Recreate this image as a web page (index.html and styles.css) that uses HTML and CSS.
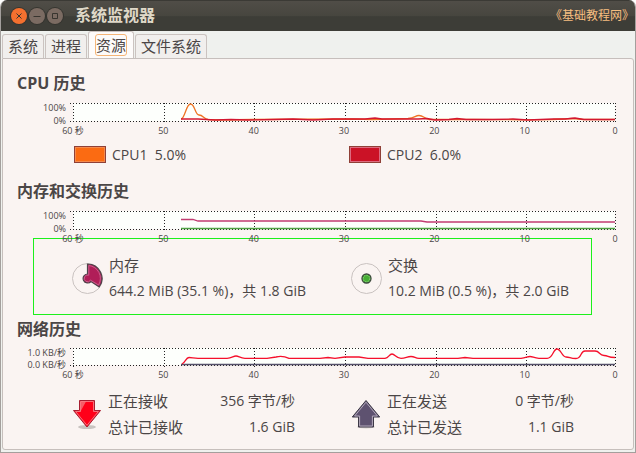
FILE: index.html
```html
<!DOCTYPE html>
<html lang="zh-CN">
<head>
  <meta charset="UTF-8">
  <meta name="viewport" content="width=device-width, initial-scale=1.0">
  <title>系统监视器</title>
  <link rel="stylesheet" href="styles.css">
</head>
<body>
  <div class="window">

    <!-- 标题栏 -->
    <header class="titlebar">
      <div class="window-buttons">
        <button class="win-btn close" aria-label="关闭"><svg viewBox="0 0 16 16"><path d="M5.500 5.500l5 5M10.500 5.500l-5 5"/></svg></button>
        <button class="win-btn" aria-label="最小化"><svg viewBox="0 0 16 16"><path d="M4.500 8.500h7"/></svg></button>
        <button class="win-btn" aria-label="最大化"><svg viewBox="0 0 16 16"><path d="M5.500 5.500h5v5h-5z"/></svg></button>
      </div>
      <h1>系统监视器</h1>
      <span class="site-name">《基础教程网》</span>
    </header>

    <!-- 选项卡 -->
    <nav class="tabs" role="tablist">
      <button class="tab" role="tab">系统</button>
      <button class="tab" role="tab">进程</button>
      <button class="tab active" role="tab" aria-selected="true"><span>资源</span></button>
      <button class="tab" role="tab">文件系统</button>
    </nav>

    <main class="panel">

      <!-- CPU -->
      <section class="cpu">
        <h2>CPU 历史</h2>
        <div class="chart">
          <div class="scale"><span>100%</span><span>0%</span></div>
          <svg class="plot" viewBox="0 0 542 18" preserveAspectRatio="none">
            <rect width="542" height="18"/>
            <path class="grid" d="M-3 .5H543M-3 18.500H543M.5 0V21M91.500 0V21M181.500 0V21M272.500 0V21M363.500 0V21M453.500 0V21M542.500 0V21"/>
            <path class="line orange" d="M108 16C112 16 113 1 117.500 1S122 12 126 12S131 16 135 16.500L145 17L180 16.500L280 16L300 16.500L335 15.500C342 15 342 12.500 346 12.500S351 15 356 16.500L400 16.500L450 16.800L480 16.500L500 15.500L510 16.500H542"/>
            <path class="line crimson" d="M108 16H125L142 17L158 16.500L175 17L200 16.500L220 16L240 17L260 16H292L302 15L309 16H345L354 15.500L362 17L376 16.500L384 15.500L393 16.500H420L440 16L455 17L480 16H492L502 15L511 16.500H542"/>
          </svg>
          <div class="axis"><span>60 秒</span><span>50</span><span>40</span><span>30</span><span>20</span><span>10</span><span>0</span></div>
        </div>
        <div class="legend">
          <button class="cpu-item"><i class="swatch orange-bg"></i>CPU1&nbsp; 5.0%</button>
          <button class="cpu-item"><i class="swatch crimson-bg"></i>CPU2&nbsp; 6.0%</button>
        </div>
      </section>

      <!-- 内存和交换 -->
      <section class="memory">
        <h2>内存和交换历史</h2>
        <div class="chart">
          <div class="scale"><span>100%</span><span>0%</span></div>
          <svg class="plot" viewBox="0 0 542 18" preserveAspectRatio="none">
            <rect width="542" height="18"/>
            <path class="grid" d="M-3 .5H543M-3 18.500H543M.5 0V21M91.500 0V21M181.500 0V21M272.500 0V21M363.500 0V21M453.500 0V21M542.500 0V21"/>
            <path class="line berry" d="M108 8.500H120L125 10H348L354 11H542"/>
            <path class="line green" d="M108 17.500H542"/>
          </svg>
          <div class="axis"><span>60 秒</span><span>50</span><span>40</span><span>30</span><span>20</span><span>10</span><span>0</span></div>
        </div>
        <div class="legend highlight">
          <div class="stat">
            <svg class="icon" viewBox="0 0 31 31">
              <circle cx="15.500" cy="15.500" r="15" fill="none" stroke="#c9c2c0"/>
              <path d="M15.500 1A14.500 14.500 0 0 1 27.200 24L19 18.500A4.500 4.500 0 1 1 15.500 11Z" fill="#b01e58" stroke="#4d4249" stroke-width="1.200"/>
              <path d="M16.800 2.500A13 13 0 0 1 26.600 22L18.500 17.200A3.400 3.400 0 1 1 16.800 12.200Z" fill="none" stroke="#cf6f98" stroke-width=".8"/>
            </svg>
            <dl>
              <dt>内存</dt>
              <dd>644.2 MiB (35.1 %)，共 1.8 GiB</dd>
            </dl>
          </div>
          <div class="stat">
            <svg class="icon" viewBox="0 0 31 31">
              <circle cx="15.500" cy="15.500" r="15" fill="none" stroke="#c9c2c0"/>
              <circle cx="15.500" cy="15.500" r="4.500" fill="#46ae35" stroke="#39463a" stroke-width="1.300"/>
              <circle cx="15.500" cy="15.500" r="3.300" fill="none" stroke="#a3dc91" stroke-width=".8" stroke-dasharray="1.500 1"/>
            </svg>
            <dl>
              <dt>交换</dt>
              <dd>10.2 MiB (0.5 %)，共 2.0 GiB</dd>
            </dl>
          </div>
        </div>
      </section>

      <!-- 网络 -->
      <section class="network">
        <h2>网络历史</h2>
        <div class="chart">
          <div class="scale"><span>1.0 KB/秒</span><span>0.0 KB/秒</span></div>
          <svg class="plot" viewBox="0 0 542 17" preserveAspectRatio="none">
            <rect width="542" height="17"/>
            <path class="grid" d="M-3 .5H543M-3 17.500H543M.5 0V20M91.500 0V20M181.500 0V20M272.500 0V20M363.500 0V20M453.500 0V20M542.500 0V20"/>
            <path class="line slate" d="M108 16.500H542"/>
            <path class="line red" d="M109 16C112 15 113 9.500 116 9.500S121 10.300 125 10.300H154C159 10.300 160 8 163 8S167 10.300 172 10.300H194L203 9C209 7.500 212 8.500 216 10.300H247L255 9.500L262 10.300L272 9H286L295 10.300H312C316 10 316 6 319 6S323 10.300 328 10.300C333 10 334 8.500 338 8.500S342 10.300 346 10.300H385L392 9.500L400 10.300H448C453 10 454 8.500 457 8.500S461 10.300 466 10.300H474C480 10.500 480 1 484 1S489 9 493 9S497 10.500 503 10.500C509 10.500 507 3 512 3H522C527 3 526 7.500 531 7.500S534 9.500 542 9.500"/>
          </svg>
          <div class="axis"><span>60 秒</span><span>50</span><span>40</span><span>30</span><span>20</span><span>10</span><span>0</span></div>
        </div>
        <div class="legend">
          <div class="stat">
            <svg class="icon" viewBox="0 0 30 30">
              <ellipse cx="15" cy="28" rx="9" ry="2" fill="#c9c4c1"/>
              <path d="M7.500 1.500H22.500V11.500H28.500L15 28L1.500 11.500H7.500Z" fill="#ff0019" stroke="#a61e31"/>
              <path d="M8.500 11.500V2.500H14L8.500 12.500H3.500" fill="#f65d67"/>
              <path d="M8.500 2.500H21.500V12.500H26.400L15 26.300L3.600 12.500H8.500Z" fill="none" stroke="#f58a91" stroke-width=".8"/>
            </svg>
            <dl class="pairs">
              <dt>正在接收</dt><dd>356 字节/秒</dd>
              <dt>总计已接收</dt><dd>1.6 GiB</dd>
            </dl>
          </div>
          <div class="stat">
            <svg class="icon" viewBox="0 0 30 30">
              <ellipse cx="15" cy="28" rx="9" ry="1.500" fill="#d5cfcc"/>
              <path d="M7.500 28V18H1.300L15 1.500L28.700 18H22.500V28Z" fill="#5e5270" stroke="#3c3846"/>
              <path d="M8.600 27V17H3.600L15 3.200L26.400 17H21.400V27Z" fill="none" stroke="#b3a9bb"/>
            </svg>
            <dl class="pairs">
              <dt>正在发送</dt><dd>0 字节/秒</dd>
              <dt>总计已发送</dt><dd>1.1 GiB</dd>
            </dl>
          </div>
        </div>
      </section>

    </main>
  </div>
</body>
</html>
```
FILE: styles.css
```css
/* ===== General Styles ===== */
* {
  box-sizing: border-box;
}

body {
  margin: 0;
  background-color: #fff;
  color: #4b4646;
  font-family: "Open Sans", "Noto Sans CJK SC", sans-serif;
  font-size: 14px;
}

h1, h2, dl, dd {
  margin: 0;
}

button {
  font: inherit;
  color: inherit;
  border: none;
  padding: 0;
  background: none;
}

.window {
  display: flex;
  flex-direction: column;
  min-height: 100vh;
  padding-bottom: 2px;
  background-color: #eff1ee;
  border: 1px solid #a39f9c;
  border-top: none;
  border-radius: 7px 7px 0 0;
  overflow: hidden;
}

/* ===== Title Bar ===== */
.titlebar {
  display: flex;
  align-items: center;
  height: 31px;
  padding: 0 7px 0 10px;
  background: linear-gradient(#504d47, #47463f 50%, #3d3d37 52%, #3d3d37);
  border-top: 1px solid #3b3a35;
}

.window-buttons {
  display: flex;
  gap: 2px;
  margin-right: 12px;
}

.win-btn {
  width: 16px;
  height: 16px;
  border-radius: 50%;
  background-color: #7b6b62;
  box-shadow: 0 0 0 1px #35342f;
}

.win-btn.close {
  background-color: #f4702f;
}

.win-btn svg {
  display: block;
  fill: none;
  stroke: #38352f;
}

.titlebar h1 {
  color: #dfd8c8;
  font-size: 16px;
  font-weight: 700;
  line-height: 28px;
  padding-bottom: 2px;
}

.site-name {
  margin-left: auto;
  margin-right: -6px;
  padding-bottom: 2px;
  color: #f7be80;
  font-size: 12px;
}

/* ===== Tabs ===== */
.tabs {
  display: flex;
  align-items: flex-end;
  gap: 1px;
  height: 27px;
  padding-left: 1px;
}

.tab {
  height: 24px;
  padding: 0 5px;
  border: 1px solid #cbc3c0;
  border-bottom: none;
  border-radius: 3px 3px 0 0;
  background-color: #f1efed;
  font-size: 15px;
  line-height: 23px;
}

.tab.active {
  height: 27px;
  padding: 0 6px;
  background-color: #fdfbfa;
}

.tab.active span {
  display: block;
  border: 1px solid #f5b577;
  border-radius: 3px;
  line-height: 20px;
}

/* ===== Panel ===== */
.panel {
  flex: 1;
  margin: 0 1px;
  padding: 12px 18px 9px 14px;
  border: 1px solid #c6bfbc;
  border-radius: 0 3px 3px 3px;
  background-color: #faf4f2;
}

h2 {
  font-size: 16px;
  font-weight: 700;
  line-height: 24px;
}

/* ===== Charts ===== */
.chart {
  display: grid;
  grid-template-columns: 49px 1fr;
  grid-template-rows: 18px 17px;
  column-gap: 7px;
  margin-top: 8px;
  font-size: 9px;
}

.scale {
  display: flex;
  flex-direction: column;
  justify-content: space-between;
  margin: -1px 0 -6px;
  text-align: right;
  line-height: 12px;
  white-space: nowrap;
}

.plot {
  width: 100%;
  height: 100%;
  overflow: visible;
}

.plot rect {
  fill: #fdfffc;
}

.grid {
  fill: none;
  stroke: #222;
  stroke-dasharray: 1 2;
}

.line {
  fill: none;
  stroke-width: 1.3;
}

.orange { stroke: #ee7424; }
.crimson { stroke: #d31831; }
.berry { stroke: #c23c71; }
.green { stroke: #4fa343; }
.slate { stroke: #55506a; }
.red { stroke: #f5102b; }

.axis {
  grid-column: 2;
  display: flex;
  justify-content: space-between;
  align-items: flex-end;
  line-height: 14px;
}

.axis span {
  display: flex;
  justify-content: center;
  width: 0;
  white-space: nowrap;
}

/* ===== Legends ===== */
.legend {
  display: grid;
  grid-template-columns: 275px 1fr;
  margin-left: 57px;
}

.cpu .legend {
  margin-top: 7px;
  margin-bottom: 16px;
}

.cpu-item {
  display: flex;
  align-items: center;
  gap: 6px;
  height: 18px;
}

.swatch {
  width: 32px;
  height: 17px;
  border: 1px solid #8f4037;
}

.orange-bg {
  background-color: #fb6b12;
  box-shadow: inset 0 0 0 1px #f48a4e;
}

.crimson-bg {
  background-color: #cb1226;
  box-shadow: inset 0 0 0 1px #dd6b80;
}

.memory .highlight {
  grid-template-columns: 279px 1fr;
  margin: -8px 23px 2px 16px;
  padding: 13px 0 10px 38px;
  border: 1px solid #1cf01c;
}

.stat {
  display: flex;
  align-items: center;
  gap: 6px;
  line-height: 26px;
  white-space: nowrap;
}

.stat dt {
  font-size: 15px;
}

.memory dd {
  font-family: "Open Sans", "Noto Sans CJK TC", sans-serif;
}

.icon {
  flex: none;
  width: 31px;
  height: 31px;
}

.network .chart {
  grid-template-rows: 17px 17px;
  margin-top: 7px;
}

.network .legend {
  grid-template-columns: 279px 1fr;
  margin-top: 6px;
  margin-left: 55px;
}

.network .icon {
  width: 30px;
  height: 30px;
}

.pairs {
  display: grid;
  grid-template-columns: 95px 92px;
}

.pairs dd {
  text-align: right;
}
```
